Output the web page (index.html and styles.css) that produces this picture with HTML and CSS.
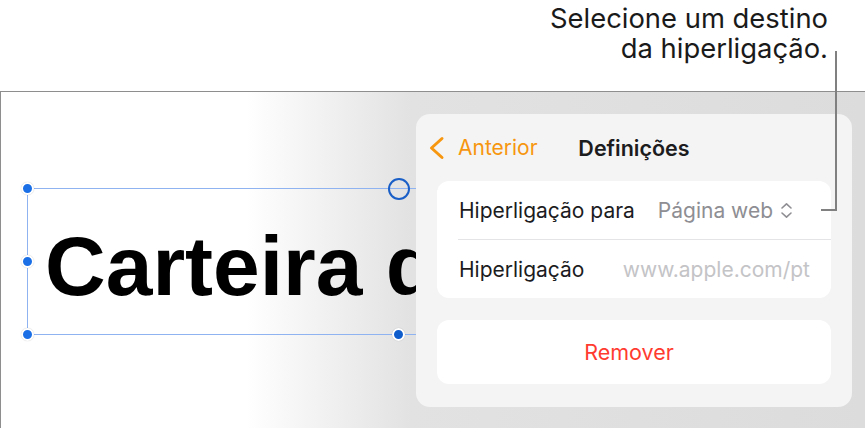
FILE: index.html
```html
<!DOCTYPE html>
<html lang="pt">
<head>
<meta charset="utf-8">
<title>Definições da hiperligação</title>
<link rel="stylesheet" href="styles.css">
</head>
<body>
  <header class="caption">
    <p class="caption-text">Selecione um destino<br>da hiperligação.</p>
  </header>
  <main class="stage">
    <div class="selection">
      <span class="handle h-tl"></span>
      <span class="handle h-ml"></span>
      <span class="handle h-bl"></span>
      <span class="handle h-br"></span>
      <span class="handle-open"></span>
      <h1 class="title">Carteira de</h1>
    </div>
    <section class="popover">
      <div class="pop-header">
        <button class="back">
          <svg class="back-icon" width="17" height="24" viewBox="0 0 17 24"><path d="M14 2.5 L3.5 12 L14 21.5" fill="none" stroke="#f7960f" stroke-width="3" stroke-linecap="round" stroke-linejoin="round"/></svg>
          <span>Anterior</span>
        </button>
        <h2 class="pop-title">Definições</h2>
        <span></span>
      </div>
      <div class="card">
        <div class="row">
          <span class="label">Hiperligação para</span>
          <span class="value">Página web
            <svg class="updown" width="13" height="17" viewBox="0 0 13 17"><path d="M2 6 L6.5 1.8 L11 6 M2 11 L6.5 15.2 L11 11" fill="none" stroke="#8e8e93" stroke-width="1.6" stroke-linecap="round" stroke-linejoin="round"/></svg>
          </span>
        </div>
        <div class="sep"></div>
        <div class="row">
          <span class="label">Hiperligação</span>
          <span class="placeholder">www.apple.com/pt</span>
        </div>
      </div>
      <div class="card remove">
        <span class="remove-text">Remover</span>
      </div>
    </section>
  </main>
  <div class="callout-v"></div>
  <div class="callout-h"></div>
</body>
</html>
```
FILE: styles.css
```css
* { box-sizing: border-box; }
html, body {
  margin: 0;
  padding: 0;
}
body {
  width: 865px;
  height: 428px;
  overflow: hidden;
  background: #ffffff;
  font-family: Inter, "Noto Sans", sans-serif;
  position: relative;
}
.caption {
  height: 91px;
  display: flex;
  justify-content: flex-end;
  padding-right: 37px;
}
.caption-text {
  margin: 0;
  padding-top: 3px;
  text-align: right;
  font-size: 27.4px;
  line-height: 30px;
  color: #1a1a1a;
}
.stage {
  position: relative;
  height: 337px;
  border-top: 1px solid #8e8e8e;
  border-left: 1px solid #8e8e8e;
  overflow: hidden;
  background: linear-gradient(to right, #ffffff 0px, #ffffff 245px, #f0f0f0 330px, #e2e2e2 410px, #dcdcdc 100%);
  padding-top: 96px;
  padding-left: 26px;
}
.selection {
  position: relative;
  width: 480px;
  height: 147px;
  border-top: 1px solid #8fb2f0;
  border-bottom: 1px solid #8fb2f0;
  border-left: 1px solid #8fb2f0;
  padding-top: 35px;
  padding-left: 17px;
}
.title {
  margin: 0;
  width: 371px;
  overflow: hidden;
  font-family: "Liberation Sans", Arial, sans-serif;
  font-weight: 700;
  font-size: 84px;
  line-height: 84px;
  color: #000;
  white-space: nowrap;
}
.handle {
  position: absolute;
  width: 13px;
  height: 13px;
  border-radius: 50%;
  background: #1a6fe6;
  border: 2px solid #ffffff;
  box-shadow: 0 0 1px rgba(0,0,0,0.25);
}
.h-tl { left: -7px; top: -7px; }
.h-ml { left: -7px; top: 66px; }
.h-bl { left: -7px; bottom: -7px; }
.h-br { left: 364px; bottom: -7px; background: #0f5ccc; }
.handle-open {
  position: absolute;
  left: 360px;
  top: -11px;
  width: 22px;
  height: 22px;
  border-radius: 50%;
  border: 2px solid #1a5fc7;
  background: transparent;
}
.popover {
  position: absolute;
  left: 415px;
  top: 22px;
  width: 436px;
  height: 293px;
  border-radius: 14px;
  background: #f4f4f4;
  padding: 0 21px 23px;
  display: flex;
  flex-direction: column;
}
.pop-header {
  height: 67px;
  display: grid;
  grid-template-columns: 1fr auto 1fr;
  align-items: center;
  margin: 0 -21px;
  padding: 0 12px;
}
.back {
  display: flex;
  align-items: center;
  gap: 13px;
  background: none;
  border: 0;
  padding: 0;
  font: inherit;
  font-size: 21px;
  color: #f7960f;
  justify-self: start;
}
.back-icon { display: block; }
.pop-title {
  margin: 0;
  font-size: 21.5px;
  font-weight: 600;
  color: #1c1c1e;
}
.card {
  background: #ffffff;
  border-radius: 12px;
}
.row {
  height: 58px;
  display: flex;
  align-items: center;
  justify-content: space-between;
  padding: 0 21px 0 22px;
  font-size: 21px;
}
.label { color: #1c1c1e; }
.value {
  color: #8e8e93;
  display: flex;
  align-items: center;
  gap: 7px;
  margin-right: 17px;
}
.updown { display: block; }
.placeholder { color: #c4c4c7; }
.sep {
  height: 1px;
  margin-left: 21px;
  background: #e4e4e6;
}
.remove {
  margin-top: 22px;
  height: 64px;
  display: flex;
  align-items: center;
  justify-content: center;
}
.remove-text {
  font-size: 21.5px;
  color: #ff3b30;
  margin-right: 10px;
}
.callout-v {
  position: absolute;
  left: 835px;
  top: 51px;
  width: 2px;
  height: 160px;
  background: #808080;
}
.callout-h {
  position: absolute;
  left: 821px;
  top: 209px;
  width: 16px;
  height: 2px;
  background: #808080;
}
```
